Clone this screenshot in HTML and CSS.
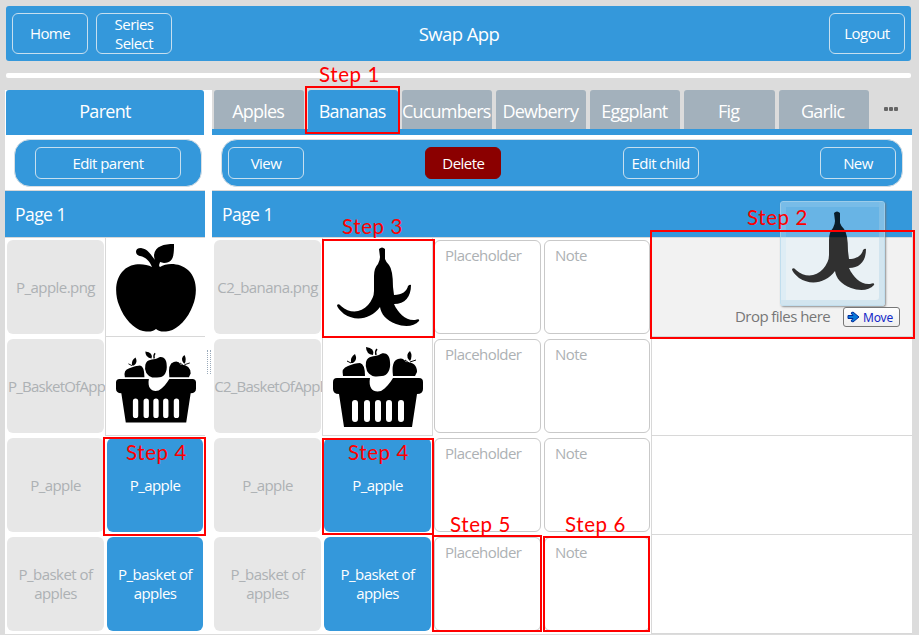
FILE: index.html
```html
<!DOCTYPE html>
<html lang="en">
<head>
<meta charset="utf-8">
<title>Swap App</title>
<link rel="stylesheet" href="styles.css">
</head>
<body>
<svg width="0" height="0" class="defs">
  <symbol id="apple" viewBox="0 0 80 88">
    <path d="M36 23C28 19 15 19 8 26C-2 35-1 51 3 61C8 75 18 85 27 87C33 88 36 88 40 85C44 88 47 88 53 87C62 85 72 75 77 61C81 51 82 35 72 26C65 19 51 18 44 23C42 22 44 19 44 18L48 19C58 19 58 10 58 0C48 0 39 2 38 11C38 14 39 16 39 16C35 11 32 5 25 4C18 4 19 11 24 12C30 13 34 18 36 23Z"/>
  </symbol>
  <symbol id="banana" viewBox="0 0 84 80">
    <path d="M43 2Q46-1 49 2L49 12Q50 15 53 18Q57 23 57 40L58 48C66 48 71 44 72 39Q74 37 75 38C75 50 69 57 58 57C62 66 70 74 79 73Q84 71 83 74C78 80 68 80 60 77C50 73 45 67 44 60C35 72 20 75 8 67Q1 61 1 58Q3 56 5 59C14 67 25 66 32 58Q38 51 38 44L38 29Q38 21 42 17Q44 13 44 10Z"/>
  </symbol>
  <symbol id="basket" viewBox="0 0 90 81">
    <path d="M33 1Q42 2 40 9Q33 8 33 1Z"/>
    <path d="M43 9Q42 5 44 3" fill="none" stroke="#000" stroke-width="1.5"/>
    <path d="M33 16C35 9 41 11 46 9C51 5 57 8 57 16C58 24 54 30 49 30C42 31 38 31 34 25Q32 20 33 16Z"/>
    <path d="M18 17Q17 11 22 8Q25 14 20 17M76 14Q72 9 77 5Q80 10 77 15Z"/>
    <path d="M14 15L18 17M77 16L83 14M72 14L76 17" fill="none" stroke="#000"/>
    <path d="M10 30Q8 22 15 20Q22 17 27 17Q32 18 32 30ZM60 30Q58 15 65 13Q70 11 73 16Q84 16 84 26L82 30Z"/>
    <path d="M4 32H37C35 43 41 47 48 45C53 42 57 37 60 32H86Q90 32 90 36V43Q90 48 84 48L79 81H11L6 48Q0 48 0 43V36Q0 32 4 32Z"/>
    <path d="M22 57V73M34 57V73M45 57V73M56 57V73M68 57V73" stroke="#fff" stroke-width="6" stroke-linecap="round"/>
  </symbol>
</svg>

<header class="topbar">
  <div class="side"><button class="btn tall">Home</button><button class="btn tall">Series Select</button></div>
  <h1>Swap App</h1>
  <div class="side end"><button class="btn tall">Logout</button></div>
</header>
<div class="rule"></div>

<main class="panes">
  <section class="pane parent">
    <div class="heading">Parent</div>
    <div class="tools"><div class="toolbar"><button class="btn wide">Edit parent</button></div></div>
    <div class="page-title">Page 1</div>
    <div class="row"><div class="name">P_apple.png</div><div class="pic"><svg class="i-apple"><use href="#apple"/></svg></div></div>
    <div class="row"><div class="name long">P_BasketOfApp</div><div class="pic"><svg class="i-basket"><use href="#basket"/></svg></div></div>
    <div class="row"><div class="name">P_apple</div><div class="word">P_apple</div></div>
    <div class="row"><div class="name">P_basket of apples</div><div class="word">P_basket of apples</div></div>
  </section>
  <div class="splitter"><i></i></div>
  <section class="pane child">
    <nav class="tabs">
      <div class="tab">Apples</div><div class="tab active">Bananas</div><div class="tab">Cucumbers</div><div class="tab">Dewberry</div><div class="tab">Eggplant</div><div class="tab">Fig</div><div class="tab">Garlic</div>
      <div class="more"><i></i><i></i><i></i></div>
    </nav>
    <div class="tools"><div class="toolbar"><button class="btn">View</button><button class="btn delete">Delete</button><button class="btn">Edit child</button><button class="btn">New</button></div></div>
    <div class="page-title">Page 1</div>
    <div class="row"><div class="name">C2_banana.png</div><div class="pic"><svg class="i-banana"><use href="#banana"/></svg></div><div class="field">Placeholder</div><div class="field">Note</div><div class="drop active-drop">Drop files here</div></div>
    <div class="row"><div class="name long">C2_BasketOfAppl</div><div class="pic"><svg class="i-basket"><use href="#basket"/></svg></div><div class="field">Placeholder</div><div class="field">Note</div><div class="drop"></div></div>
    <div class="row"><div class="name">P_apple</div><div class="word">P_apple</div><div class="field">Placeholder</div><div class="field">Note</div><div class="drop"></div></div>
    <div class="row"><div class="name">P_basket of apples</div><div class="word">P_basket of apples</div><div class="field">Placeholder</div><div class="field">Note</div><div class="drop"></div></div>
  </section>
</main>

<div class="drag"><svg class="i-banana"><use href="#banana"/></svg></div>
<div class="move"><svg width="13" height="12" viewBox="0 0 13 12"><path d="M1 4.5H6L4 2L6 1L12 6L6 11L4 10L6 7.5H1Z" fill="#0878d8" stroke="#002a9c"/></svg>Move</div>

<div class="mark m1"><span>Step 1</span></div>
<div class="mark m2"><span>Step 2</span></div>
<div class="mark m3"><span>Step 3</span></div>
<div class="mark m4"><span>Step 4</span></div>
<div class="mark m4b"><span>Step 4</span></div>
<div class="mark m5"><span>Step 5</span></div>
<div class="mark m6"><span>Step 6</span></div>
</body>
</html>
```
FILE: styles.css
```css
* { box-sizing: border-box; }
body {
  margin: 0;
  width: 919px;
  height: 635px;
  padding: 6px 7px 0 5px;
  overflow: hidden;
  position: relative;
  background: #dcdcdc;
  font: 15px/19px "Open Sans", "Noto Sans", sans-serif;
  letter-spacing: -.55px;
  color: #fff;
}
.defs { position: absolute; }
.topbar {
  height: 55px;
  margin: 0 1px;
  padding: 0 6px;
  display: flex;
  align-items: center;
  justify-content: space-between;
  background: #3498db;
  border-radius: 3px;
}
h1 { margin: 0; font-size: 18.5px; font-weight: 400; line-height: 24px; letter-spacing: -.6px; }
.side { width: 160px; display: flex; gap: 8px; }
.end { width: 152px; margin-left: 7px; justify-content: flex-end; }
.btn {
  width: 76px;
  height: 32px;
  padding: 0;
  border: 1px solid #c7dfef;
  border-radius: 6px;
  background: #3498db;
  color: #fff;
  font: inherit;
  letter-spacing: inherit;
}
.tall { height: 41px; padding: 0 10px; }
.wide { width: 146px; }
.btn.delete { background: #8b0000; border-color: #8b0000; }
.rule { height: 5px; margin: 12px 1px; background: #fff; border-radius: 2px; }
.panes { display: flex; height: 544px; background: #fff; width: 907px; }
.parent { width: 200px; }
.child { width: 700px; }
.splitter { width: 7px; display: flex; align-items: center; justify-content: center; }
.splitter i { width: 4px; height: 24px; border-left: 1px dotted #9aaaba; border-right: 1px dotted #9aaaba; }
.heading {
  height: 45px;
  margin: 0 1px;
  background: #3498db;
  border-radius: 3px 3px 0 0;
  text-align: center;
  font-size: 18px;
  letter-spacing: -.7px;
  line-height: 42px;
}
.tools { height: 56px; padding: 4px 3px 0 9px; border-bottom: 1px solid #d8d8d8; }
.child .tools { padding-right: 9px; }
.toolbar {
  height: 48px;
  padding: 0 6px;
  display: flex;
  align-items: center;
  justify-content: space-between;
  background: #3498db;
  border: 1px solid #d8dfe4;
  border-radius: 16px;
}
.parent .toolbar { justify-content: center; }
.page-title {
  height: 47px;
  padding-left: 10px;
  background: #3498db;
  border-bottom: 1px solid #d8d8d8;
  font-size: 17.5px;
  line-height: 46px;
}
.tabs {
  height: 45px;
  padding-left: 2px;
  display: flex;
  gap: 4px;
  background: #dcdcdc;
  border-bottom: 6px solid #3498db;
}
.tab {
  width: 90.1px;
  background: #a3b1bc;
  border-radius: 3px 3px 0 0;
  text-align: center;
  text-indent: -2px;
  font-size: 18px;
  letter-spacing: -.8px;
  line-height: 42px;
  white-space: nowrap;
}
.tab.active { background: #3498db; }
.more { display: flex; gap: 1px; padding: 17px 0 0 11px; }
.more i { width: 4px; height: 4px; border-radius: 1px; background: #666; }
.row { display: grid; height: 99px; grid-template-columns: 100px 100px; }
.child .row { grid-template-columns: 110px 111px 110px 109px 260px; }
.name, .word {
  margin: 2px 1px 3px 2px;
  display: flex;
  align-items: center;
  justify-content: center;
  text-align: center;
  border-radius: 6px;
}
.name { padding: 0 5px; background: #e7e7e7; color: #adb1b4; }
.long { padding: 0 0 0 2px; letter-spacing: -.75px; white-space: nowrap; }
.word { margin-right: 2px; padding: 0 6px; background: #3498db; }
.pic {
  display: flex;
  align-items: center;
  justify-content: center;
  border-left: 1px solid #d8d8d8;
  border-bottom: 1px solid #d8d8d8;
}
.child .pic { border-right: 1px solid #d8d8d8; }
.field {
  margin: 2px 2px 3px 1px;
  padding: 5px 10px;
  border: 1px solid #c9c9c9;
  border-radius: 6px;
  color: #adb1b4;
}
.drop { border-left: 1px solid #d8d8d8; border-bottom: 1px solid #d8d8d8; margin-left: -1px; }
.active-drop {
  background: #f2f2f2;
  color: #777;
  padding: 69px 0 0 83px;
}
.i-apple { width: 80px; height: 88px; margin-top: 2px; }
.parent .i-basket { width: 80px; height: 73px; }
.i-basket { width: 90px; height: 81px; }
.i-banana { width: 84px; height: 80px; }
.drag {
  position: absolute;
  left: 780px;
  top: 201px;
  width: 105px;
  height: 105px;
  padding: 9px 0 0 10px;
  border: 1px solid #b5daee;
  border-radius: 3px;
  background: rgba(215, 240, 252, .4);
  box-shadow: 1px 1px 2px #777, inset 0 0 0 5px rgba(190, 225, 245, .3), inset -6px -6px 0 -1px rgba(160, 195, 215, .3);
  opacity: .8;
}
.move {
  position: absolute;
  left: 843px;
  top: 307px;
  width: 57px;
  height: 20px;
  display: flex;
  align-items: center;
  gap: 3px;
  padding-left: 3px;
  border: 1px solid #777;
  border-radius: 3px;
  background: linear-gradient(#fff, #eee);
  color: #1428c8;
  font: 12px "Noto Sans", sans-serif;
  letter-spacing: -.2px;
}
.mark { position: absolute; border: 2px solid #f00; color: #f00; }
.mark span {
  position: absolute;
  font: 20.5px/24px Lato, sans-serif;
  white-space: nowrap;
  letter-spacing: .6px;
}
.m1 { left: 305px; top: 86px; width: 95px; height: 48px; }
.m1 span { left: 12px; top: -26px; }
.m2 { left: 650px; top: 230px; width: 265px; height: 109px; }
.m2 span { left: 95px; top: -27px; }
.m3 { left: 322px; top: 239px; width: 113px; height: 99px; }
.m3 span { left: 18px; top: -27px; }
.m4 { left: 103px; top: 437px; width: 103px; height: 99px; }
.m4 span { left: 21px; top: 1px; }
.m4b { left: 322px; top: 438px; width: 112px; height: 97px; }
.m4b span { left: 24px; top: 0; }
.m5 { left: 432px; top: 535px; width: 110px; height: 97px; }
.m5 span { left: 16px; top: -25px; }
.m6 { left: 543px; top: 536px; width: 107px; height: 96px; }
.m6 span { left: 20px; top: -26px; }
```
